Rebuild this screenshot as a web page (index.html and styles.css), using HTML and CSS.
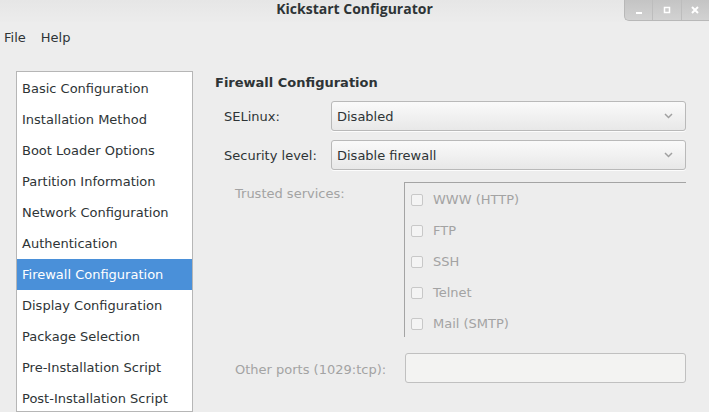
FILE: index.html
```html
<!DOCTYPE html>
<html>
<head>
<meta charset="utf-8">
<link rel="stylesheet" href="styles.css">
</head>
<body>
<div class="window">
  <div class="titlebar">
    <div class="title">Kickstart Configurator</div>
    <div class="wm-buttons">
      <div class="wm-btn"><svg width="10" height="10" viewBox="0 0 10 10"><rect x="2" y="7" width="6" height="2" fill="#fff"/></svg></div>
      <div class="wm-btn"><svg width="10" height="10" viewBox="0 0 10 10"><rect x="2.5" y="2.5" width="5" height="5" fill="none" stroke="#fff" stroke-width="1.5"/></svg></div>
      <div class="wm-btn"><svg width="10" height="10" viewBox="0 0 10 10"><path d="M2 2L8 8M8 2L2 8" stroke="#fff" stroke-width="2"/></svg></div>
    </div>
  </div>
  <div class="menubar">
    <span class="menu-item">File</span>
    <span class="menu-item">Help</span>
  </div>
  <div class="main">
    <ul class="sidebar">
      <li>Basic Configuration</li>
      <li>Installation Method</li>
      <li>Boot Loader Options</li>
      <li>Partition Information</li>
      <li>Network Configuration</li>
      <li>Authentication</li>
      <li class="selected">Firewall Configuration</li>
      <li>Display Configuration</li>
      <li>Package Selection</li>
      <li>Pre-Installation Script</li>
      <li>Post-Installation Script</li>
    </ul>
    <div class="content">
      <h2 class="heading">Firewall Configuration</h2>
      <div class="form-row">
        <span class="label">SELinux:</span>
        <div class="combo"><span>Disabled</span><svg class="arrow" width="9" height="6" viewBox="0 0 9 6"><path d="M1 1L4.5 4.5L8 1" fill="none" stroke="#a0a0a0" stroke-width="1.5"/></svg></div>
      </div>
      <div class="form-row">
        <span class="label">Security level:</span>
        <div class="combo"><span>Disable firewall</span><svg class="arrow" width="9" height="6" viewBox="0 0 9 6"><path d="M1 1L4.5 4.5L8 1" fill="none" stroke="#a0a0a0" stroke-width="1.5"/></svg></div>
      </div>
      <div class="trusted-row">
        <span class="dim-label">Trusted services:</span>
        <div class="frame">
          <div class="check"><span class="box"></span><span>WWW (HTTP)</span></div>
          <div class="check"><span class="box"></span><span>FTP</span></div>
          <div class="check"><span class="box"></span><span>SSH</span></div>
          <div class="check"><span class="box"></span><span>Telnet</span></div>
          <div class="check"><span class="box"></span><span>Mail (SMTP)</span></div>
        </div>
      </div>
      <div class="ports-row">
        <span class="dim-label">Other ports (1029:tcp):</span>
        <div class="entry"></div>
      </div>
    </div>
  </div>
</div>
</body>
</html>
```
FILE: styles.css
```css
html, body {
  margin: 0;
  padding: 0;
}
body {
  width: 709px;
  height: 412px;
  overflow: hidden;
  background: #ededed;
  font-family: "DejaVu Sans", sans-serif;
  font-size: 13px;
  color: #2e3436;
}
.window {
  width: 709px;
  height: 412px;
  display: flex;
  flex-direction: column;
}
.titlebar {
  height: 22px;
  display: flex;
  align-items: flex-start;
  justify-content: center;
  position: relative;
  background: linear-gradient(#e6e6e6, #ececec);
}
.title {
  font-family: "Open Sans", sans-serif;
  font-weight: bold;
  font-size: 14px;
  line-height: 18px;
  color: #2e3436;
}
.wm-buttons {
  position: absolute;
  right: 0;
  top: 0;
  height: 20px;
  width: 84px;
  display: flex;
  background: linear-gradient(#c4c4c4, #d2d2d2);
  border-left: 1px solid #b8b8b8;
  border-bottom: 1px solid #b8b8b8;
  border-bottom-left-radius: 5px;
}
.wm-btn {
  flex: 1;
  display: flex;
  align-items: center;
  justify-content: center;
  border-left: 1px solid #bdbdbd;
}
.wm-btn:first-child {
  border-left: none;
}
.menubar {
  height: 28px;
  display: flex;
  align-items: center;
  padding: 4px 0 0 4px;
  box-sizing: border-box;
  gap: 15px;
}
.menu-item {
  line-height: 18px;
}
.main {
  display: flex;
  padding: 21px 0 0 16px;
  flex: 1;
  min-height: 0;
}
.sidebar {
  list-style: none;
  margin: 0;
  padding: 1px 0 0 0;
  width: 175px;
  background: #fff;
  border: 1px solid #b6b6b6;
  flex-shrink: 0;
}
.sidebar li {
  height: 31px;
  line-height: 31px;
  padding-left: 5px;
  white-space: nowrap;
}
.sidebar li.selected {
  background: #4a90d9;
  color: #fff;
}
.content {
  margin-left: 22px;
  flex: 1;
}
.heading {
  margin: 2px 0 0 0;
  font-size: 13px;
  font-weight: bold;
  line-height: 20px;
}
.form-row {
  display: flex;
  align-items: center;
  padding-left: 9px;
  margin-top: 9px;
}
.heading + .form-row {
  margin-top: 8px;
}
.label {
  width: 107px;
  flex-shrink: 0;
}
.combo {
  width: 336px;
  height: 28px;
  border: 1px solid #b9b9b9;
  border-radius: 3px;
  background: linear-gradient(#fafafa, #e8e8e8);
  display: flex;
  align-items: center;
  justify-content: space-between;
  padding: 0 12px 0 5px;
  box-sizing: content-box;
  box-shadow: 0 1px 0 rgba(255,255,255,0.8);
}
.trusted-row {
  display: flex;
  align-items: flex-start;
  padding-left: 20px;
  margin-top: 12px;
}
.dim-label {
  color: #a3a3a3;
  width: 169px;
  flex-shrink: 0;
}
.trusted-row .dim-label {
  line-height: 20px;
  padding-top: 2px;
}
.frame {
  width: 282px;
  height: 155px;
  border-left: 1px solid #a4a4a4;
  border-top: 1px solid #a4a4a4;
  padding-top: 1px;
  box-sizing: border-box;
}
.check {
  height: 31px;
  display: flex;
  align-items: center;
  padding-left: 6px;
  color: #a3a3a3;
}
.box {
  width: 10px;
  height: 10px;
  border: 1px solid #c8c8c8;
  border-radius: 2px;
  background: #f4f4f4;
  margin-right: 10px;
}
.ports-row {
  display: flex;
  align-items: center;
  padding-left: 20px;
  margin-top: 16px;
}
.ports-row .dim-label {
  width: 170px;
  padding-top: 3px;
}
.entry {
  width: 279px;
  height: 28px;
  border: 1px solid #c0c0c0;
  border-radius: 3px;
  background: #f3f3f2;
}
```
